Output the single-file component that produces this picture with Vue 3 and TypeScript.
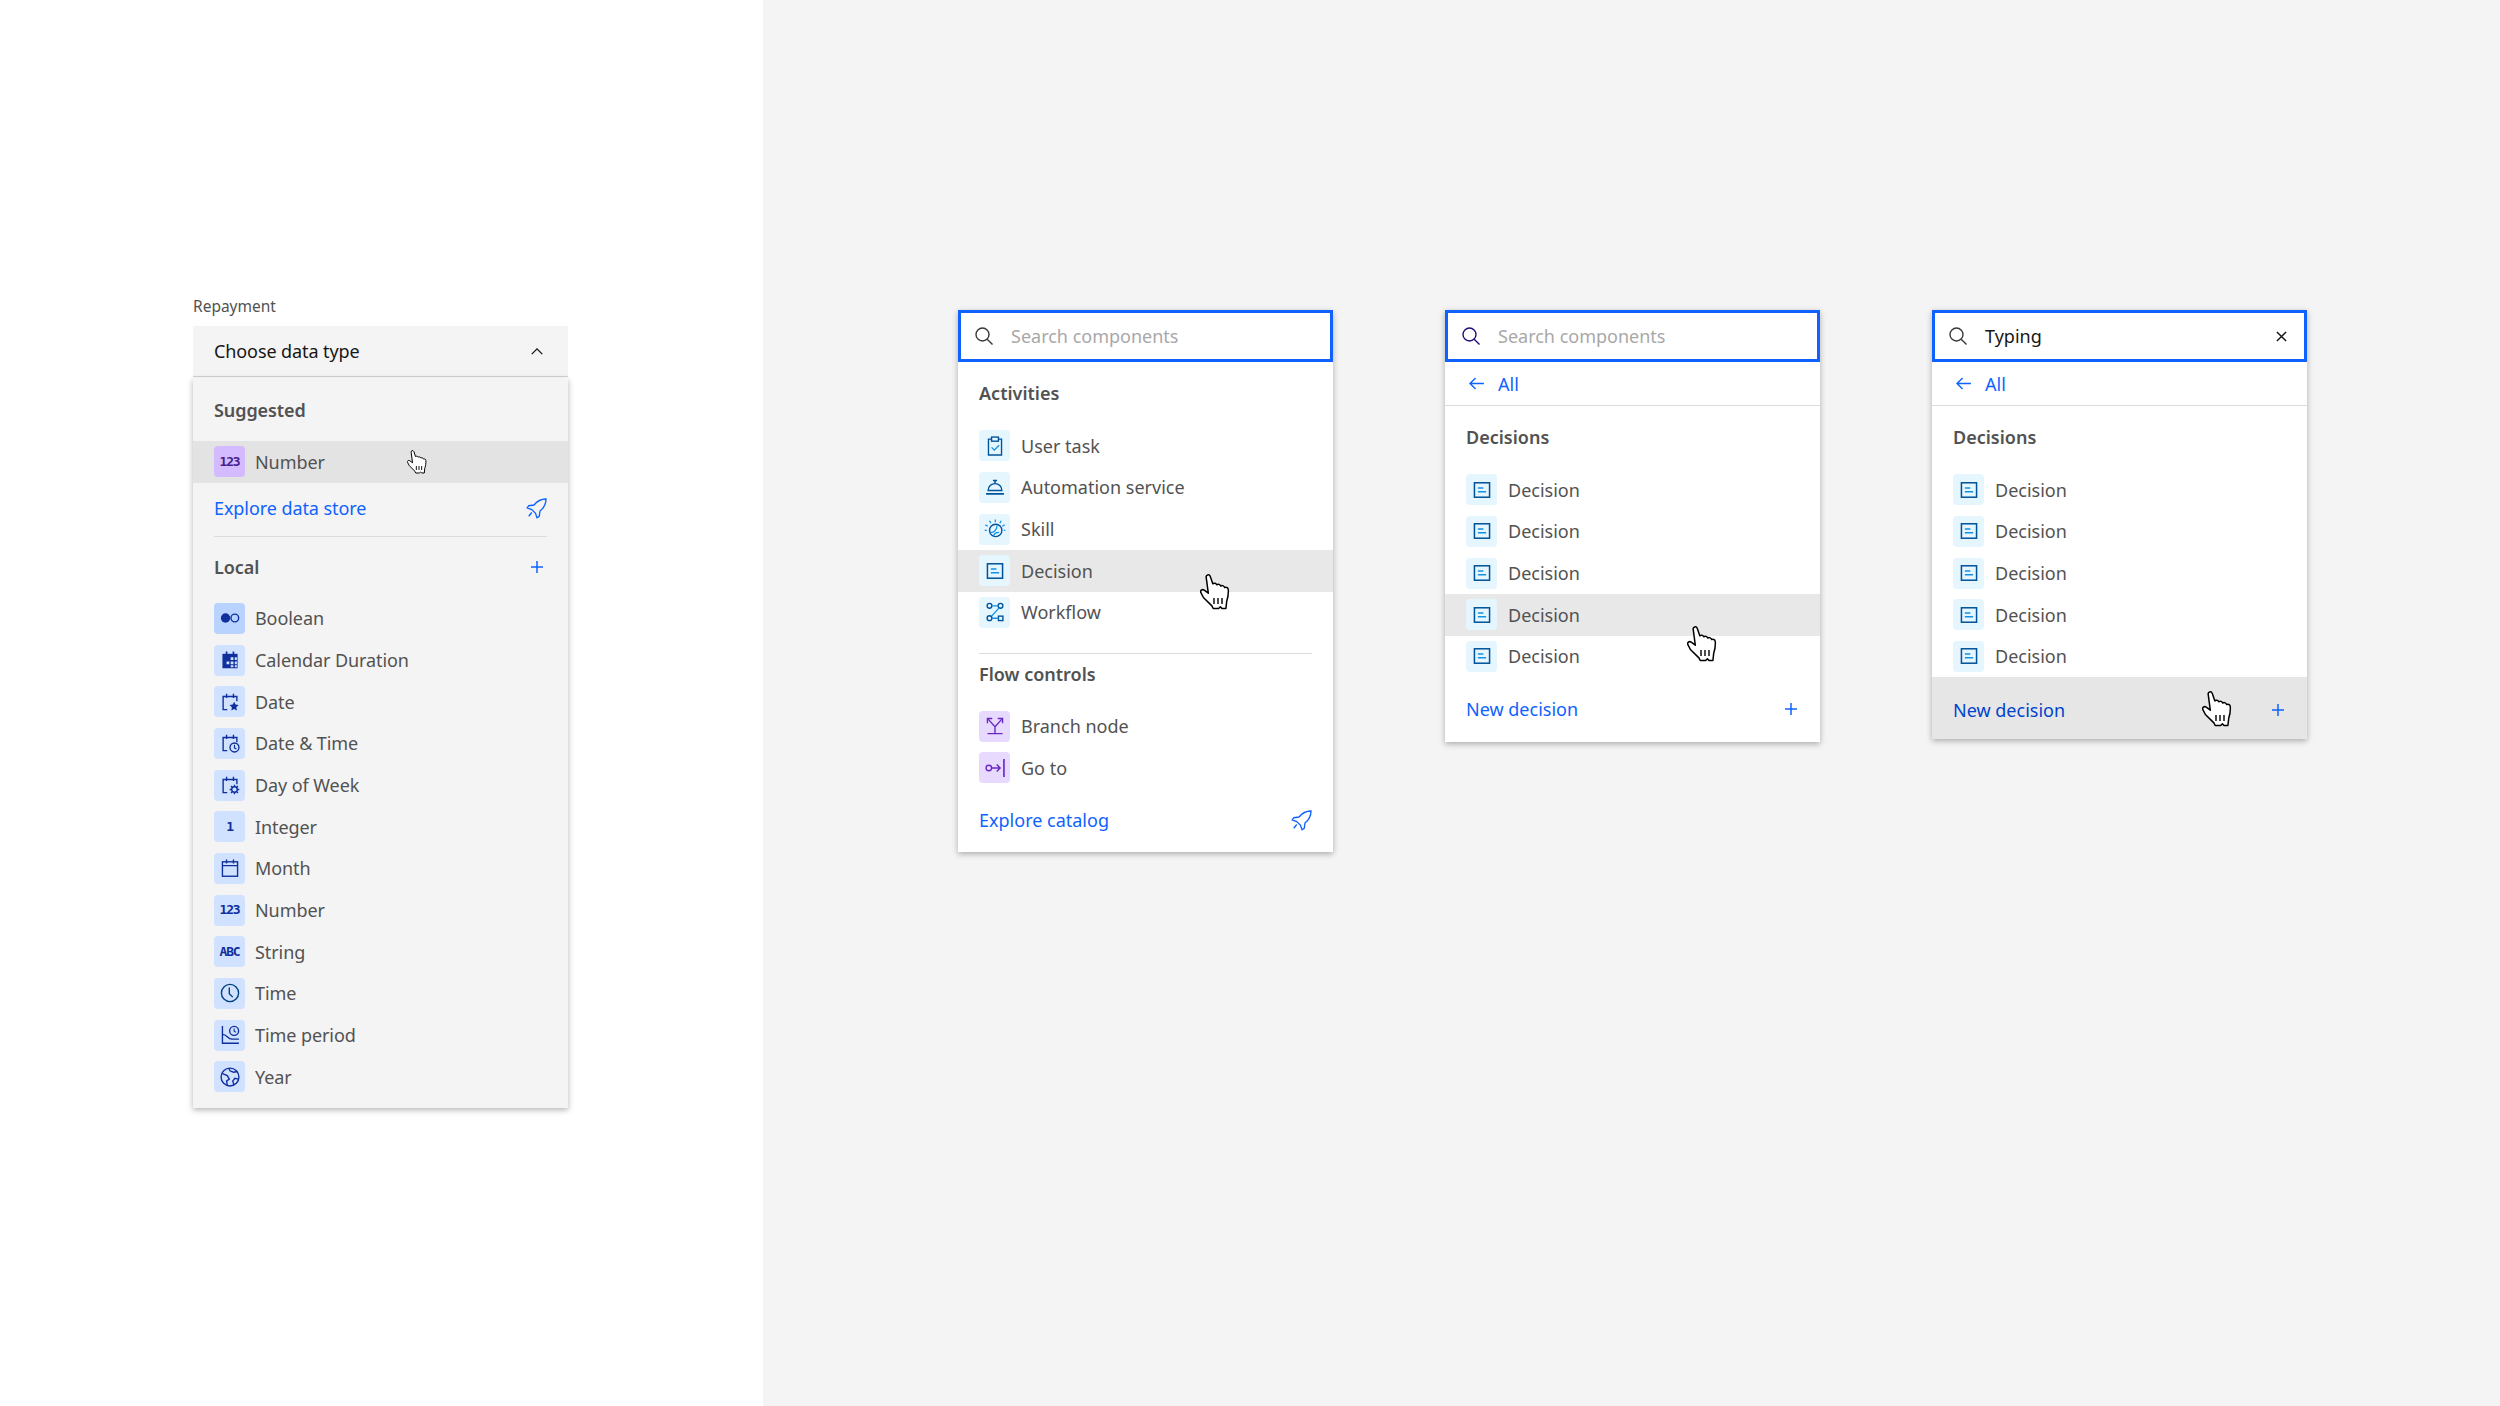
<script setup lang="ts">
interface Item {
  label: string
  icon?: string
  glyph?: string
  tile?: string
  hover?: boolean
}

interface Card {
  query: string
  typed?: boolean
  clear?: boolean
  searchClass?: string
  back?: boolean
  groups: { title: string; items: Item[] }[]
  footer: string
  footerIcon: 'rocket' | 'plus'
  footerClass: string
  cursorClass: string
}

const calendarBase = '<path d="M12 27H6V8h20v7" fill="none" stroke="currentColor" stroke-width="2"/><path d="M11 4v6M21 4v6" stroke="currentColor" stroke-width="2"/>'

const icons: Record<string, string> = {
  boolean: '<circle cx="9.5" cy="16" r="6.8" fill="currentColor"/><circle cx="23" cy="16" r="5.6" fill="none" stroke="currentColor" stroke-width="2"/>',
  calendarDuration: '<rect x="5" y="7" width="22" height="21" fill="currentColor"/><path d="M11 3.5v5M21 3.5v5" stroke="currentColor" stroke-width="2.4"/><path d="M17 12h4v4h-4zM23 12h3v4h-3zM11 18h4v4h-4zM17 18h4v4h-4zM23 18h3v4h-3zM17 23.500h4v3h-4zM23 23.500h3v3h-3z" fill="#d0e2ff"/>',
  date: calendarBase + '<path d="M22 15.500l2 4.300 4.600.6-3.400 3.200.9 4.700-4.100-2.300-4.100 2.300.9-4.700-3.400-3.200 4.600-.6z" fill="currentColor"/>',
  dateTime: calendarBase + '<circle cx="22.500" cy="22.500" r="6.500" fill="none" stroke="currentColor" stroke-width="2"/><path d="M22.500 18.500v4.500l2.800 1.800" fill="none" stroke="currentColor" stroke-width="1.700"/>',
  dayOfWeek: calendarBase + '<circle cx="22.500" cy="22.500" r="4" fill="none" stroke="currentColor" stroke-width="2"/><path d="M22.500 15.500v3M22.500 26.500v3M15.500 22.500h3M26.500 22.500h3M17.500 17.500l2 2M25.500 25.500l2 2M27.500 17.500l-2 2M19.500 25.500l-2 2" stroke="currentColor" stroke-width="2"/>',
  month: '<rect x="5" y="7" width="22" height="21" fill="none" stroke="currentColor" stroke-width="2"/><path d="M11 3.500v6M21 3.500v6M5 12.500h22" stroke="currentColor" stroke-width="2"/>',
  time: '<circle cx="16" cy="16" r="12.500" fill="none" stroke="#00417f" stroke-width="2"/><path d="M15 8v9l5 5" fill="none" stroke="#00417f" stroke-width="2"/>',
  timePeriod: '<path d="M5 3v25h24" fill="none" stroke="currentColor" stroke-width="2"/><path d="M5 15c7 0 7 7 14 7h10" fill="none" stroke="currentColor" stroke-width="2"/><circle cx="22" cy="10" r="6.500" fill="none" stroke="currentColor" stroke-width="2"/><path d="M22 6.500v4l2.500 1.500" fill="none" stroke="currentColor" stroke-width="1.600"/>',
  year: '<circle cx="16" cy="16" r="13" fill="none" stroke="currentColor" stroke-width="2"/><path d="M5 11l7 3 3 5-4 3 1 6M27 8l-6 1-5-2-2-4M28 19l-5-1-3 4 2 6" fill="none" stroke="currentColor" stroke-width="2"/>',
  userTask: '<path d="M11 6H6.500v23h19V6H21" fill="none" stroke="currentColor" stroke-width="2"/><rect x="11" y="3" width="10" height="6" fill="none" stroke="currentColor" stroke-width="2"/><path d="M11 18l4 4 7-7" fill="none" stroke="#1192e8" stroke-width="2"/>',
  automation: '<path d="M6 21a10 10 0 0 1 20 0z" fill="none" stroke="currentColor" stroke-width="2"/><path d="M13 6.500h6M16 6.500v4M3 26h26" stroke="currentColor" stroke-width="2.200"/>',
  skill: '<circle cx="17" cy="18" r="9" fill="none" stroke="currentColor" stroke-width="2"/><path d="M8 20c5 3 11-2 11-9M14 27c0-4 3-6 8-6" fill="none" stroke="#1192e8" stroke-width="1.800"/><path d="M16.500 2v4M8 4l2 3.500M25 4l-2 3.500M2 10l3.500 2M30 10l-3.500 2M1 18h3M29 18h2" stroke="#1192e8" stroke-width="1.800"/>',
  decision: '<rect x="5" y="5.500" width="22" height="21" fill="none" stroke="currentColor" stroke-width="2.200"/><path d="M10 13h8M10 18.500h12" stroke="#1192e8" stroke-width="2"/>',
  workflow: '<circle cx="8" cy="7" r="3.500" fill="none" stroke="currentColor" stroke-width="2"/><circle cx="24" cy="7" r="3.500" fill="none" stroke="currentColor" stroke-width="2"/><circle cx="8" cy="25" r="3.500" fill="none" stroke="currentColor" stroke-width="2"/><rect x="21" y="22" width="6.500" height="6.500" fill="none" stroke="currentColor" stroke-width="2"/><path d="M12 7h8.500M11 22L22 10M12 25h9" stroke="#1192e8" stroke-width="2"/>',
  branch: '<path d="M5 27h22M16 27V17L6 6M16 17L26 6" fill="none" stroke="currentColor" stroke-width="2"/><path d="M5 12V5h7M27 12V5h-7" fill="none" stroke="currentColor" stroke-width="2"/>',
  goTo: '<circle cx="7" cy="16" r="4" fill="none" stroke="currentColor" stroke-width="2"/><path d="M11 16h12M18.500 11l5 5-5 5" fill="none" stroke="currentColor" stroke-width="2"/><path d="M29 3v26" stroke="currentColor" stroke-width="2.400"/>',
}

const localItems: Item[] = [
  { label: 'Boolean', icon: 'boolean', tile: 'tile-bool' },
  { label: 'Calendar Duration', icon: 'calendarDuration' },
  { label: 'Date', icon: 'date' },
  { label: 'Date & Time', icon: 'dateTime' },
  { label: 'Day of Week', icon: 'dayOfWeek' },
  { label: 'Integer', glyph: '1' },
  { label: 'Month', icon: 'month' },
  { label: 'Number', glyph: '123' },
  { label: 'String', glyph: 'ABC' },
  { label: 'Time', icon: 'time' },
  { label: 'Time period', icon: 'timePeriod' },
  { label: 'Year', icon: 'year' },
]

function decisions(hoverIndex: number): Item[] {
  return [0, 1, 2, 3, 4].map((i) => ({
    label: 'Decision',
    icon: 'decision',
    tile: 'tile-cyan',
    hover: i === hoverIndex,
  }))
}

const cards: Card[] = [
  {
    query: 'Search components',
    groups: [
      {
        title: 'Activities',
        items: [
          { label: 'User task', icon: 'userTask', tile: 'tile-cyan' },
          { label: 'Automation service', icon: 'automation', tile: 'tile-cyan' },
          { label: 'Skill', icon: 'skill', tile: 'tile-cyan' },
          { label: 'Decision', icon: 'decision', tile: 'tile-cyan', hover: true },
          { label: 'Workflow', icon: 'workflow', tile: 'tile-cyan' },
        ],
      },
      {
        title: 'Flow controls',
        items: [
          { label: 'Branch node', icon: 'branch', tile: 'tile-purple' },
          { label: 'Go to', icon: 'goTo', tile: 'tile-purple' },
        ],
      },
    ],
    footer: 'Explore catalog',
    footerIcon: 'rocket',
    footerClass: 'footer-catalog',
    cursorClass: 'cursor-a',
  },
  {
    query: 'Search components',
    searchClass: 'search-icon-indigo',
    back: true,
    groups: [{ title: 'Decisions', items: decisions(3) }],
    footer: 'New decision',
    footerIcon: 'plus',
    footerClass: 'footer-new',
    cursorClass: 'cursor-b',
  },
  {
    query: 'Typing',
    typed: true,
    clear: true,
    back: true,
    groups: [{ title: 'Decisions', items: decisions(-1) }],
    footer: 'New decision',
    footerIcon: 'plus',
    footerClass: 'footer-hover',
    cursorClass: 'cursor-c',
  },
]

const rocketPath = 'M28 4c-7 0-12 3-16 8l-7 1-2 3 6 2 5 5 2 6 3-2 1-7c5-4 8-9 8-16zM9 22l-4 5'
const handPath = 'M6.200 3.400c-.5-2.600 3-3.600 4-1.200l2.600 7.600c1.300-1 3.200-.6 3.900 1 1.400-1 3.400-.5 4 1.200 1.600-.9 3.500-.1 4 1.600 1-.5 3.400-.4 3.600 2.200.2 4-.3 8-1.600 11.500l-.8 7.200H22l-1.600-1.600-1.800 1.600h-5.400l-1.300-2.600-8.500-8.400L.9 18.600c-1-2 1.200-3.800 3.300-2.500l4.100 3.100z'
</script>

<template>
  <div class="page">
    <section class="form-side">
      <div class="field-label">Repayment</div>
      <div class="select-field">
        <span>Choose data type</span>
        <svg class="chevron" viewBox="0 0 16 10"><path d="M2 8l6-6 6 6" /></svg>
      </div>
      <div class="menu">
        <div class="menu-head head-first">Suggested</div>
        <div class="row row-hover-strong">
          <span class="tile tile-violet"><span class="glyph">123</span></span>
          <span class="row-label">Number</span>
          <svg class="cursor cursor-small" viewBox="0 0 30 36">
            <path :d="handPath" />
            <path class="stripes" d="M14 24v6M18 24v6M22 24v6" />
          </svg>
        </div>
        <div class="link-row link-row-store">
          <span>Explore data store</span>
          <svg class="rocket" viewBox="0 0 32 32"><path :d="rocketPath" /></svg>
        </div>
        <div class="divider"></div>
        <div class="menu-head head-local">
          <span>Local</span>
          <svg class="plus plus-local" viewBox="0 0 12 12"><path d="M6 0v12M0 6h12" /></svg>
        </div>
        <div class="row" v-for="item in localItems" :key="item.label">
          <span class="tile" :class="item.tile">
            <span v-if="item.glyph" class="glyph">{{ item.glyph }}</span>
            <svg v-else class="tile-icon" viewBox="0 0 32 32" v-html="icons[item.icon!]"></svg>
          </span>
          <span class="row-label">{{ item.label }}</span>
        </div>
      </div>
    </section>

    <section class="canvas-side">
      <div class="card" v-for="(card, c) in cards" :key="c">
        <div class="search">
          <svg class="search-icon" :class="card.searchClass" viewBox="0 0 18 18">
            <circle cx="7.500" cy="7.500" r="6.500" />
            <path d="M12.200 12.200l5.300 5.300" />
          </svg>
          <span class="search-text" :class="{ typed: card.typed }">{{ card.query }}</span>
          <svg v-if="card.clear" class="clear" viewBox="0 0 12 12"><path d="M1 1l10 10M11 1L1 11" /></svg>
        </div>
        <div v-if="card.back" class="back">
          <svg class="arrow" viewBox="0 0 16 14"><path d="M16 7H1M7 1L1 7l6 6" /></svg>
          <span>All</span>
        </div>
        <div v-for="(group, g) in card.groups" :key="group.title">
          <div v-if="g > 0" class="divider card-divider"></div>
          <div class="menu-head" :class="g > 0 ? 'head-next' : 'head-first head-card'">{{ group.title }}</div>
          <div class="row" :class="{ 'row-hover': item.hover }" v-for="(item, i) in group.items" :key="i">
            <span class="tile" :class="item.tile">
              <svg class="tile-icon" viewBox="0 0 32 32" v-html="icons[item.icon!]"></svg>
            </span>
            <span class="row-label">{{ item.label }}</span>
          </div>
        </div>
        <div class="link-row" :class="card.footerClass">
          <span>{{ card.footer }}</span>
          <svg v-if="card.footerIcon === 'rocket'" class="rocket" viewBox="0 0 32 32"><path :d="rocketPath" /></svg>
          <svg v-else class="plus" viewBox="0 0 12 12"><path d="M6 0v12M0 6h12" /></svg>
        </div>
        <svg class="cursor" :class="card.cursorClass" viewBox="0 0 30 36">
          <path :d="handPath" />
          <path class="stripes" d="M14 24v6M18 24v6M22 24v6" />
        </svg>
      </div>
    </section>
  </div>
</template>

<style scoped>
.page {
  display: grid;
  grid-template-columns: 763px 1fr;
  width: 2500px;
  height: 1406px;
  overflow: hidden;
  font-family: "Noto Sans", sans-serif;
  font-size: 18px;
  line-height: 20px;
  color: #525252;
}

.form-side {
  background: #fff;
  padding: 296px 0 0 193px;
}

.canvas-side {
  background: #f4f4f4;
  display: flex;
  align-items: flex-start;
  gap: 112px;
  padding: 310px 0 0 195px;
}

.field-label {
  font-size: 15.500px;
  margin-bottom: 10px;
}

.select-field {
  width: 375px;
  height: 51px;
  box-sizing: border-box;
  padding: 0 24px 0 21px;
  display: flex;
  align-items: center;
  justify-content: space-between;
  background: #f4f4f4;
  border-bottom: 1px solid #d4d4d4;
  color: #161616;
  letter-spacing: -0.100px;
}

.chevron {
  width: 14px;
  height: 9px;
  fill: none;
  stroke: #161616;
  stroke-width: 1.600;
}

.menu {
  position: relative;
  width: 375px;
  margin-top: 1px;
  padding-bottom: 10px;
  background: #f4f4f4;
  box-shadow: 0 2px 6px rgba(0, 0, 0, 0.3);
  letter-spacing: -0.080px;
}

.menu .row {
  gap: 10px;
}

.menu-head {
  display: flex;
  align-items: center;
  justify-content: space-between;
  box-sizing: border-box;
  padding: 0 21px;
  font-weight: 600;
}

.head-first {
  height: 63px;
}

.head-card {
  padding-bottom: 2px;
}

.head-local {
  height: 61px;
  padding-bottom: 1px;
}

.head-next {
  height: 51px;
  padding-bottom: 11px;
}

.row {
  position: relative;
  display: flex;
  align-items: center;
  gap: 11px;
  height: 41.670px;
  padding: 0 21px;
}

.row-hover {
  background: #e8e8e8;
}

.row-hover-strong {
  background: #e3e3e3;
}

.tile {
  flex: none;
  width: 31px;
  height: 31px;
  border-radius: 4px;
  display: flex;
  align-items: center;
  justify-content: center;
  background: #d0e2ff;
  color: #0f2f9c;
}

.tile-bool {
  background: #b8d3ff;
}

.tile-violet {
  background: #d4bbff;
  color: #491d8b;
}

.tile-cyan {
  background: #e5f6ff;
  color: #00539a;
}

.tile-purple {
  background: #e8daff;
  color: #6929c4;
}

.tile-icon {
  width: 22px;
  height: 22px;
}

.glyph {
  font-family: "DejaVu Sans Mono", monospace;
  font-size: 13px;
  font-weight: 700;
  letter-spacing: -1.100px;
}

.link-row {
  display: flex;
  align-items: center;
  justify-content: space-between;
  box-sizing: border-box;
  padding: 0 21px;
  color: #0f62fe;
}

.link-row-store {
  height: 50px;
}

.rocket {
  width: 24px;
  height: 24px;
  margin-right: -2px;
  fill: none;
  stroke: #0f62fe;
  stroke-width: 1.800;
}

.plus {
  width: 12px;
  height: 12px;
  margin-right: 2px;
  fill: none;
  stroke: #0f62fe;
  stroke-width: 1.500;
}

.plus-local {
  margin-right: 4px;
}

.divider {
  height: 1px;
  margin: 3px 21px 0;
  background: #dcdcdc;
}

.card-divider {
  margin: 20px 21px 0;
}

.card {
  position: relative;
  width: 375px;
  background: #fff;
  box-shadow: 0 2px 6px rgba(0, 0, 0, 0.3);
}

.search {
  display: flex;
  align-items: center;
  box-sizing: border-box;
  height: 52px;
  padding: 0 17px 0 14px;
  background: #fff;
  border: 3px solid #0f62fe;
}

.search-icon {
  flex: none;
  width: 18px;
  height: 18px;
  fill: none;
  stroke: #393939;
  stroke-width: 1.400;
}

.search-icon-indigo {
  stroke: #1c0f7a;
}

.search-text {
  flex: 1;
  margin-left: 18px;
  color: #a8a8a8;
}

.search-text.typed {
  color: #161616;
}

.clear {
  width: 11px;
  height: 11px;
  fill: none;
  stroke: #161616;
  stroke-width: 1.600;
}

.back {
  display: flex;
  align-items: center;
  gap: 14px;
  height: 43px;
  padding: 0 24px;
  color: #0f62fe;
  border-bottom: 1px solid #dcdcdc;
}

.arrow {
  width: 15px;
  height: 13px;
  fill: none;
  stroke: #0f62fe;
  stroke-width: 1.500;
}

.footer-catalog {
  height: 63px;
}

.footer-new {
  height: 65px;
  padding-bottom: 1px;
}

.footer-hover {
  height: 62px;
  padding-top: 3px;
  background: #e6e6e6;
  color: #0043ce;
}

.cursor {
  position: absolute;
  width: 30px;
  height: 36px;
  fill: #fff;
  stroke: #000;
  stroke-width: 1.500;
  stroke-linejoin: round;
}

.cursor .stripes {
  fill: none;
  stroke-width: 1.400;
}

.cursor-small {
  left: 214px;
  top: 9px;
  width: 20px;
  height: 24px;
}

.cursor-a {
  left: 242px;
  top: 264px;
}

.cursor-b {
  left: 242px;
  top: 316px;
}

.cursor-c {
  left: 270px;
  top: 381px;
}
</style>

<style>
body {
  margin: 0;
}
</style>
